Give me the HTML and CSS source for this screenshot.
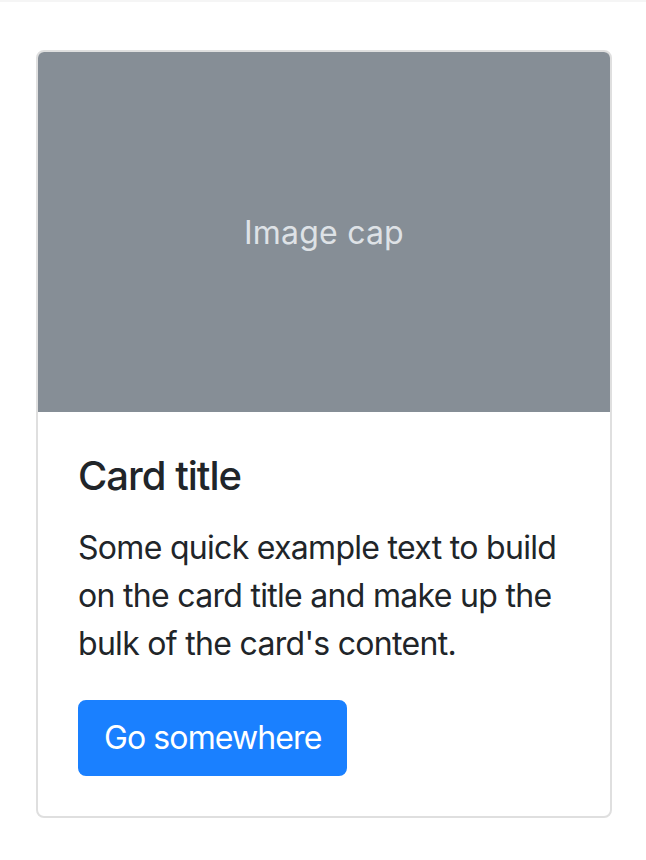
FILE: index.html
```html
<!DOCTYPE html>
<html lang="en">
<head>
<meta charset="utf-8">
<title>Card</title>
<link rel="stylesheet" href="styles.css">
</head>
<body>
<div class="topbar"></div>
<main class="page">
  <div class="card">
    <div class="card-img">Image cap</div>
    <div class="card-body">
      <h5 class="card-title">Card title</h5>
      <p class="card-text">Some quick example text to build on the card title and make up the bulk of the card's content.</p>
      <a href="#" class="btn">Go somewhere</a>
    </div>
  </div>
</main>
</body>
</html>
```

FILE: styles.css
```css
* { box-sizing: border-box; }
html, body {
  margin: 0;
  padding: 0;
  background: #fff;
  font-family: Inter, "Noto Sans", "Liberation Sans", sans-serif;
  color: #212529;
}
.topbar {
  height: 2px;
  background: #f5f5f5;
}
.page {
  padding: 48px 0 0 36px;
}
.card {
  width: 576px;
  border: 2px solid #dfdfdf;
  border-radius: 8px;
  overflow: hidden;
  background: #fff;
}
.card-img {
  height: 360px;
  background: #868e96;
  color: #dee2e6;
  font-size: 32px;
  letter-spacing: 0.2px;
  display: flex;
  align-items: center;
  justify-content: center;
}
.card-body {
  padding: 40px;
}
.card-title {
  margin: 0 0 24px;
  font-size: 40px;
  line-height: 48px;
  font-weight: 500;
  letter-spacing: -1px;
  color: #212529;
}
.card-text {
  margin: 0 0 32px;
  font-size: 32px;
  line-height: 48px;
  letter-spacing: -0.7px;
  color: #212529;
}
.btn {
  display: inline-block;
  padding: 12px 24px;
  font-size: 32px;
  line-height: 48px;
  letter-spacing: -0.9px;
  color: #fff;
  background: #1a80ff;
  border: 2px solid #1a80ff;
  border-radius: 8px;
  text-decoration: none;
}
```
